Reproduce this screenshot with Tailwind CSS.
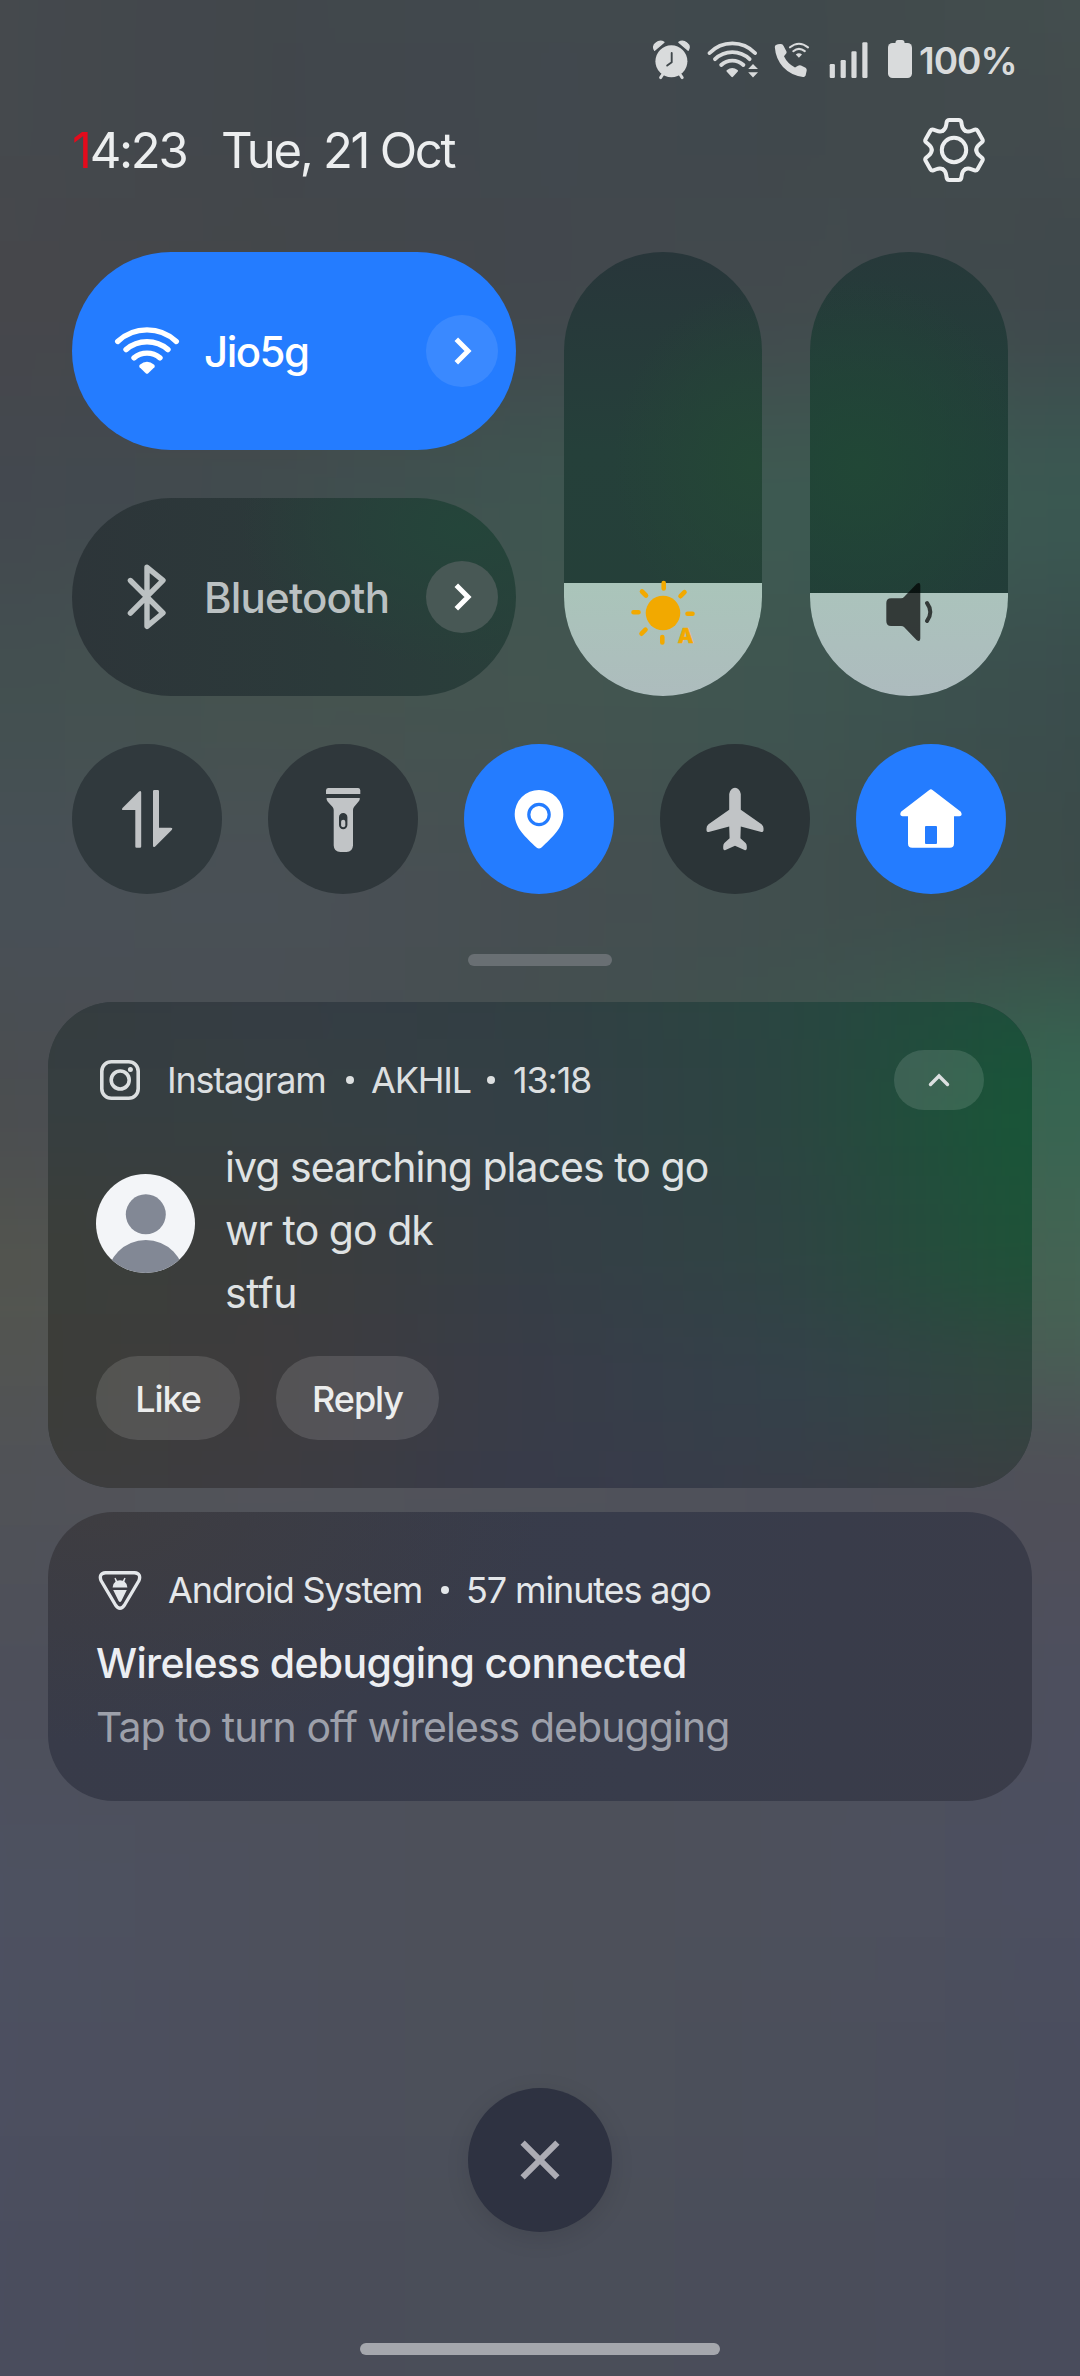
<!DOCTYPE html>
<html lang="en">
<head>
<meta charset="utf-8">
<title>Quick settings</title>
<script src="https://cdn.jsdelivr.net/npm/@tailwindcss/browser@4"></script>
</head>
<body class="font-['Inter',sans-serif]">
<main class="relative isolate flex h-[2376px] w-[1080px] flex-col overflow-hidden bg-[#494d55] text-[#e4e7ea]">

  <!-- Soft wallpaper -->
  <div class="absolute -inset-[198px] -z-10 flex flex-col blur-[64px]">
    <div class="h-[198px] bg-[linear-gradient(90deg,#46494d_13.4%,#42484b_31.7%,#404a4c_50%,#404a4c_68.3%,#44514f_86.6%)]"></div>
    <div class="h-[198px] bg-[linear-gradient(90deg,#45494d_13.4%,#41464b_31.7%,#41484e_50%,#40484c_68.3%,#434c4d_86.6%)]"></div>
    <div class="h-[198px] bg-[linear-gradient(90deg,#46474b_13.4%,#44474a_31.7%,#42474d_50%,#424a4d_68.3%,#3f484c_86.6%)]"></div>
    <div class="h-[198px] bg-[linear-gradient(90deg,#43484f_13.4%,#414b4e_31.7%,#3e5650_50%,#3d5b51_68.3%,#3a5952_86.6%)]"></div>
    <div class="h-[198px] bg-[linear-gradient(90deg,#435050_13.4%,#45524f_31.7%,#445550_50%,#3e5550_68.3%,#3a4c4c_86.6%)]"></div>
    <div class="h-[198px] bg-[linear-gradient(90deg,#485057_13.4%,#4a5056_31.7%,#464e51_50%,#404e4e_68.3%,#3b4a48_86.6%)]"></div>
    <div class="h-[198px] bg-[linear-gradient(90deg,#4a4d50_13.4%,#494e54_31.7%,#444f4f_50%,#3e554e_68.3%,#356851_86.6%)]"></div>
    <div class="h-[198px] bg-[linear-gradient(90deg,#53554f_13.4%,#515352_31.7%,#4c5053_50%,#48564f_68.3%,#456554_86.6%)]"></div>
    <div class="h-[198px] bg-[linear-gradient(90deg,#505257_13.4%,#52535a_31.7%,#50525a_50%,#4e505a_68.3%,#504f58_86.6%)]"></div>
    <div class="h-[198px] bg-[linear-gradient(90deg,#4d4f5a_13.4%,#4d4f5a_31.7%,#4c4f5a_50%,#4c4f5b_68.3%,#4d4f5e_86.6%)]"></div>
    <div class="h-[198px] bg-[linear-gradient(90deg,#4d5161_13.4%,#4d505c_31.7%,#4d5059_50%,#4d505c_68.3%,#4c4f61_86.6%)]"></div>
    <div class="h-[198px] bg-[linear-gradient(90deg,#4c4f60_13.4%,#4c4f5c_31.7%,#4c5059_50%,#4b4f5b_68.3%,#4a4d5d_86.6%)]"></div>
    <div class="h-[198px] bg-[linear-gradient(90deg,#4a4d5e_13.4%,#4a4d59_31.7%,#4a4e59_50%,#4a4d5a_68.3%,#494c5c_86.6%)]"></div>
    <div class="h-[198px] bg-[linear-gradient(90deg,#4a4d5c_13.4%,#4a4d5a_31.7%,#4a4d59_50%,#4a4d5a_68.3%,#494c5b_86.6%)]"></div>
  </div>

  <!-- Status bar -->
  <div class="flex h-[80px] items-start pt-[40px] pl-[653px] text-[#d9dbdc]">
    <svg class="h-10 w-[38px] shrink-0" viewBox="0 0 38 40" fill="currentColor">
      <circle cx="18.4" cy="21.3" r="16"/>
      <path d="M1.6 10.3Q-1 6 3 3Q7 -.4 11 2.2Z M35.2 10.3Q37.8 6 33.8 3Q29.8 -.4 25.8 2.2Z" stroke="currentColor" stroke-width="1.2" stroke-linejoin="round"/>
      <path d="M10 34L7.6 37.6M26.8 34L29.2 37.6" stroke="currentColor" stroke-width="3" stroke-linecap="round"/>
      <path d="M18.7 13V22.2L14.2 25.6" fill="none" stroke="#40474b" stroke-width="1.9" stroke-linecap="round" stroke-linejoin="round"/>
    </svg>
    <svg class="mt-px ml-4 h-[38px] w-[52px] shrink-0" viewBox="0 0 52 38" fill="currentColor">
      <g fill="none" stroke="currentColor" stroke-width="3.9" stroke-linecap="round">
        <path d="M2.6 12A31.5 31.5 0 0 1 48 12"/><path d="M8 18.2A24.7 24.7 0 0 1 42.6 18.2"/><path d="M14.2 24A16.3 16.3 0 0 1 36.4 24"/>
      </g>
      <path d="M19.6 30.4Q19 29.6 20 29Q25.2 25 30.6 29Q31.4 29.6 30.8 30.4L26 35.8Q25.2 36.6 24.4 35.8Z"/>
      <path d="M41.2 28L46 23L51 28ZM41.2 31.2H51L46 36.4Z"/>
    </svg>
    <svg class="mt-px ml-[15px] h-[38px] w-[36px] shrink-0" viewBox="0 0 36 38" fill="currentColor">
      <path d="M.8 6Q.8 4.6 2 4Q4 2.8 7 3Q8.8 3.2 9.6 5L12.5 10.5Q13 12 11.8 13L10 15.2Q13 22 21 26.6L24 24.8Q25.5 24 27 24.6L31.6 26.8Q33 27.8 32.7 29.5L31.6 34.5Q31 36.2 29 35.9Q17 34.5 9 26Q1.6 17.5 .8 6Z"/>
      <g fill="none" stroke="currentColor" stroke-width="2.1" stroke-linecap="round"><path d="M16 6.3Q24.9 -.8 34 6.3"/><path d="M19.3 10.2Q24.9 5.6 30.8 10.2"/></g>
      <path d="M21.8 13.6Q24.9 11 28 13.6L24.9 16.8Z"/>
    </svg>
    <svg class="ml-[19px] h-10 w-[40px] shrink-0" viewBox="0 0 40 40" fill="currentColor">
      <rect x=".7" y="24" width="5.2" height="14" rx="1.2"/><rect x="11.6" y="20" width="5.2" height="18" rx="1.2"/><rect x="22.4" y="11.3" width="5.2" height="26.7" rx="1.2"/><rect x="33.3" y="2.2" width="5.2" height="35.8" rx="1.2"/>
    </svg>
    <svg class="ml-[19px] h-10 w-6 shrink-0" viewBox="0 0 24 40" fill="currentColor">
      <rect x="0" y="3" width="24" height="35" rx="4.5"/><rect x="7.5" y="0" width="9" height="6" rx="2.5"/>
    </svg>
    <span class="ml-[7px] text-[37px] leading-[41px] font-semibold tracking-[-1px] whitespace-nowrap">100%</span>
  </div>

  <!-- Clock, date, settings -->
  <div class="flex h-[140px] items-center pr-[94px] pl-[72px] text-[49px] font-normal tracking-[-2.3px] text-[#eceeef]">
    <span class="mt-[2px] w-[149px] whitespace-nowrap"><span class="text-[#e30b1c]">1</span>4:23</span>
    <span class="mt-[2px] whitespace-nowrap">Tue, 21 Oct</span>
    <svg class="ml-auto h-[68px] w-[64px] shrink-0" viewBox="-32 -34 64 68" fill="none" stroke="currentColor" stroke-width="4" stroke-linecap="round">
      <defs><path id="tooth" d="M-11.15 -19.3C-9 -20.5 -8.2 -22.5 -7.8 -25L-7.3 -28Q-6.8 -30 -4.8 -30H4.8Q6.8 -30 7.3 -28L7.8 -25C8.2 -22.5 9 -20.5 11.15 -19.3"/></defs>
      <use href="#tooth"/><use href="#tooth" transform="rotate(60)"/><use href="#tooth" transform="rotate(120)"/><use href="#tooth" transform="rotate(180)"/><use href="#tooth" transform="rotate(240)"/><use href="#tooth" transform="rotate(300)"/>
      <circle r="12.2"/>
    </svg>
  </div>

  <!-- Large tiles and sliders -->
  <div class="mx-[72px] mt-8 flex gap-12">
    <div class="flex w-[444px] flex-col gap-12">
      <div class="flex h-[198px] items-center rounded-full bg-[#247cff] pr-[18px] pl-[42px] text-white">
        <svg class="h-[50px] w-[66px] shrink-0" viewBox="0 0 66 50" fill="currentColor">
          <g fill="none" stroke="currentColor" stroke-width="5.4" stroke-linecap="round">
            <path d="M3.7 15.4A43 43 0 0 1 62.3 15.4"/><path d="M12 23.6A32 32 0 0 1 54 23.6"/><path d="M20 31.8A20.5 20.5 0 0 1 46 31.8"/>
          </g>
          <path d="M25.6 41.2Q24.6 40 25.8 38.8Q33 32.8 40.2 38.8Q41.4 40 40.4 41.2L34 47.4Q33 48.2 32 47.4Z"/>
        </svg>
        <span class="mt-px ml-6 text-[42px] font-medium tracking-[-1.5px] whitespace-nowrap">Jio5g</span>
        <span class="ml-auto flex size-[72px] items-center justify-center rounded-full bg-white/10">
          <svg class="ml-[1px] h-7 w-[18px]" viewBox="0 0 18 28" fill="none" stroke="currentColor" stroke-width="5"><path d="M2.3 2.3L14 14L2.3 25.7"/></svg>
        </span>
      </div>
      <div class="flex h-[198px] items-center rounded-full bg-[radial-gradient(ellipse_50%_70%_at_88%_15%,#24453a,transparent),linear-gradient(90deg,#2d3539,#2b3a3a_60%,#293f3a)] pr-[18px] pl-[53px] text-[#bbc1c2]">
        <svg class="h-[68px] w-[44px] shrink-0" viewBox="0 0 44 68" fill="none" stroke="currentColor" stroke-width="5.4" stroke-linecap="round" stroke-linejoin="round"><path d="M5.4 17.5L38 50L22 63.3V4.3L38 17.3L5.4 50.2"/></svg>
        <span class="ml-[35px] text-[42px] font-[480] tracking-[-.8px] whitespace-nowrap">Bluetooth</span>
        <span class="ml-auto flex size-[72px] items-center justify-center rounded-full bg-[#485855] text-white">
          <svg class="ml-[1px] h-7 w-[18px]" viewBox="0 0 18 28" fill="none" stroke="currentColor" stroke-width="5"><path d="M2.3 2.3L14 14L2.3 25.7"/></svg>
        </span>
      </div>
    </div>
    <div class="relative flex h-[444px] w-[198px] flex-col justify-end overflow-hidden rounded-full bg-[radial-gradient(ellipse_70%_40%_at_95%_48%,#244736,transparent),linear-gradient(180deg,#28363a,#25403a_45%,#253f38)]">
      <div class="h-[113px] bg-[linear-gradient(180deg,#aac5ba,#adbcbd)]"></div>
      <svg class="absolute top-[328px] left-[66px] h-[68px] w-[68px]" viewBox="0 0 68 68" fill="#f2a900">
        <circle cx="33" cy="33" r="17.3"/>
        <path d="M33.7 3V8.5M32.3 57V62.5M3.5 32.3H8.5M57.5 33.7H62.5M12 11.5L16 15.5M54.5 12.2L50.5 16.2M15.5 49.7L11.5 53.7" stroke="#f2a900" stroke-width="4.6" stroke-linecap="round"/>
        <text x="47.8" y="63" font-size="20.5" font-weight="800" stroke="#f2a900" stroke-width=".5">A</text>
      </svg>
    </div>
    <div class="relative flex h-[444px] w-[198px] flex-col justify-end overflow-hidden rounded-full bg-[radial-gradient(ellipse_85%_42%_at_25%_48%,#214736,transparent),linear-gradient(180deg,#27393a,#214039_45%,#233b38)]">
      <div class="h-[103px] bg-[linear-gradient(180deg,#abc3bc,#adbbbe)]"></div>
      <svg class="absolute top-[328px] left-[74px] h-[64px] w-[52px] text-black/70" viewBox="0 0 52 64" fill="currentColor">
        <path d="M7 18.3H17Q19 18.3 20 17L32.5 4Q36.3 1.5 36.3 5.5V58.5Q36.3 62.5 32.5 60L20 47Q19 46 17 46H7Q2.3 46 2.3 41V23Q2.3 18.3 7 18.3Z"/>
        <path d="M43 23Q49.6 32 43 41" fill="none" stroke="currentColor" stroke-width="4" stroke-linecap="round"/>
      </svg>
    </div>
  </div>

  <!-- Round toggles -->
  <div class="mx-[72px] mt-12 flex gap-[46px] text-[#c1c4c6]">
    <div class="flex size-[150px] items-center justify-center rounded-full bg-[#30393d]">
      <svg class="size-[62px]" viewBox="-4 0 62 62" fill="currentColor">
        <path d="M19 3.5L2.5 20Q1 22 3.5 22H15.3V58.5Q15.3 59.8 16.5 59.8H20Q21.2 59.8 21.2 58.5V4.5Q21.2 2 19 3.5Z"/>
        <path d="M35.2 58.5L51.7 42Q53.2 39.7 50.7 39.7H39V3.3Q39 2 37.8 2H34.2Q33 2 33 3.3V57.5Q33 60 35.2 58.5Z"/>
      </svg>
    </div>
    <div class="flex size-[150px] items-center justify-center rounded-full bg-[#2f373b]">
      <svg class="mt-px h-[68px] w-[36px]" viewBox="0 0 36 68" fill="currentColor">
        <path d="M3 2H33.3Q35.3 2 35.3 4.5V8H1V4.5Q1 2 3 2Z"/>
        <path fill-rule="evenodd" d="M1.6 12H34.8Q35 14 33.6 15.6L29 21Q28 22.3 28 24V59.5Q27.5 66 21.5 66H15.5Q9 66 8.7 59.5V24Q8.7 22.3 7.6 21L2.6 15.4Q1.3 14 1.6 12ZM18.2 27A4.2 4.2 0 0 0 14 31.2V39A4.2 4.2 0 0 0 22.4 39V31.2A4.2 4.2 0 0 0 18.2 27Z"/>
        <rect x="16.1" y="33.7" width="4.2" height="7.6" rx="2.1"/>
      </svg>
    </div>
    <div class="flex size-[150px] items-center justify-center rounded-full bg-[#247cff] text-white">
      <svg class="h-[62px] w-[54px]" viewBox="0 0 54 62">
        <path fill="currentColor" d="M27 2A24.3 24.3 0 0 0 2.7 26.3C2.7 40 14 49.5 24.5 59.6Q27 61.6 29.5 59.6C40 49.5 51.3 40 51.3 26.3A24.3 24.3 0 0 0 27 2Z"/>
        <circle cx="27" cy="26.5" r="10.2" fill="none" stroke="#247cff" stroke-width="3.2"/>
      </svg>
    </div>
    <div class="flex size-[150px] items-center justify-center rounded-full bg-[#2b3437]">
      <svg class="h-[66px] w-[60px]" viewBox="0 0 60 66" fill="currentColor">
        <path d="M30 1.7Q34.5 1.9 35.8 8V23.7L56.5 38.2Q58.6 40 58.5 42.5V44.5Q58.3 46.3 56.3 46L35.8 40.5L35.4 52.3L40.6 57Q41.8 58.4 41.8 60.5V62.5Q41.5 64.8 39.5 64L30 59.7L20.5 64Q18.5 64.8 18.2 62.5V60.5Q18.2 58.4 19.4 57L24.6 52.3L24.2 40.5L3.7 46Q1.7 46.3 1.5 44.5V42.5Q1.4 40 3.5 38.2L24.2 23.7V8Q25.5 1.9 30 1.7Z"/>
      </svg>
    </div>
    <div class="flex size-[150px] items-center justify-center rounded-full bg-[#247cff] text-white">
      <svg class="h-[64px] w-[66px]" viewBox="0 0 66 64" fill="currentColor">
        <path fill-rule="evenodd" d="M31.3 2.9Q32.9 1.4 34.5 2.9L62.8 24.8Q65 28.9 61.5 29.2H56V56.5Q56 60.8 51.8 60.8H14.2Q10 60.8 10 56.5V29.2H4.5Q1 28.9 3 24.8ZM28 39Q27 39 27 40V56Q27 57 28 57H38Q39 57 39 56V40Q39 39 38 39Z"/>
      </svg>
    </div>
  </div>

  <div class="mx-auto mt-[60px] h-3 w-[144px] rounded-full bg-[#696f73]"></div>

  <!-- Instagram notification -->
  <section class="relative isolate mx-12 mt-9 flex h-[486px] flex-col overflow-hidden rounded-[66px] bg-[#363e43] px-12">
    <div class="absolute -inset-[100px] -z-10 flex flex-col blur-[44px]">
      <div class="flex-1 bg-[linear-gradient(90deg,#343c3e_8.4%,#353c45_29.2%,#313f42_50%,#294641_70.8%,#1e4d3b_91.6%)]"></div>
      <div class="flex-1 bg-[linear-gradient(90deg,#363e40_8.4%,#363f42_29.2%,#333f46_50%,#2b4541_70.8%,#175637_91.6%)]"></div>
      <div class="flex-1 bg-[linear-gradient(90deg,#3b3e3a_8.4%,#3b3d3d_29.2%,#353e46_50%,#2f4443_70.8%,#1d5337_91.6%)]"></div>
      <div class="flex-1 bg-[linear-gradient(90deg,#3c3d39_8.4%,#3e3c3e_29.2%,#383c48_50%,#34414a_70.8%,#31473f_91.6%)]"></div>
      <div class="flex-1 bg-[linear-gradient(90deg,#3d3d3e_8.4%,#3d3c42_29.2%,#373b4b_50%,#393c48_70.8%,#3d3d42_91.6%)]"></div>
    </div>
    <header class="mt-[48px] flex h-[60px] items-center text-[36px] tracking-[-1.2px] text-[#dcdfe0]">
      <svg class="ml-1 size-10 shrink-0" viewBox="0 0 40 40" fill="none" stroke="currentColor" stroke-width="3.6">
        <rect x="1.8" y="1.8" width="36.4" height="36.4" rx="9.5"/><circle cx="20.2" cy="20" r="9"/><circle cx="30.4" cy="9.6" r="2.5" fill="currentColor" stroke="none"/>
      </svg>
      <span class="ml-[27px] w-[179px] whitespace-nowrap">Instagram</span>
      <i class="size-2 shrink-0 rounded-full bg-current"></i>
      <span class="ml-[17px] w-[116px] whitespace-nowrap">AKHIL</span>
      <i class="size-2 shrink-0 rounded-full bg-current"></i>
      <span class="ml-[18px] whitespace-nowrap">13:18</span>
      <span class="ml-auto flex h-[60px] w-[90px] items-center justify-center rounded-full bg-white/12">
        <svg class="h-3.5 w-[22px]" viewBox="0 0 22 14" fill="none" stroke="currentColor" stroke-width="3.4" stroke-linecap="round"><path d="M2.5 11.5L11 3L19.5 11.5"/></svg>
      </span>
    </header>
    <div class="mt-[26px] flex items-center">
      <svg class="mb-[14px] size-[99px] shrink-0" viewBox="0 0 99 99">
        <clipPath id="avatar"><circle cx="49.5" cy="49.5" r="49.5"/></clipPath>
        <g clip-path="url(#avatar)"><rect width="99" height="99" fill="#f3f5f8"/><circle cx="49.8" cy="40.3" r="20" fill="#828895"/><circle cx="49.8" cy="105" r="39" fill="#828895"/></g>
      </svg>
      <p class="ml-[30px] text-[41px] leading-[63px] tracking-[-.97px] whitespace-nowrap text-[#dfe2e3]">ivg searching places to go<br>wr to go dk<br><span class="tracking-[-.3px]">stfu</span></p>
    </div>
    <div class="mt-[31px] flex gap-9 text-[36px] font-medium tracking-[-1.1px] text-[#eceded]">
      <span class="flex h-[84px] w-[144px] items-center justify-center rounded-full bg-white/12 pt-[2px]">Like</span>
      <span class="flex h-[84px] w-[163px] items-center justify-center rounded-full bg-white/12 pt-[2px]">Reply</span>
    </div>
  </section>

  <!-- Android System notification -->
  <section class="mx-12 mt-6 h-[289px] rounded-[66px] bg-[radial-gradient(ellipse_45%_80%_at_5%_0%,#3e3d41,transparent),linear-gradient(90deg,#383b49,#383c4b_60%,#3a3c49)] px-12 pt-12">
    <header class="flex h-[60px] items-center text-[36px] tracking-[-1.13px]">
      <svg class="ml-[2px] h-[41px] w-[44px] shrink-0" viewBox="0 0 44 41" fill="none" stroke="currentColor" stroke-width="3.4" stroke-linejoin="round">
        <path d="M7.5 2.7H36.5Q43.5 3.4 41 10.5L26.5 35Q22 41.5 17.5 35L3 10.5Q.5 3.4 7.5 2.7Z"/>
        <path fill="currentColor" stroke="none" d="M14.6 17.5Q15 13.5 17.6 11.6L16.4 8.2L17.6 7.7L19.2 10.7Q22 9.6 24.8 10.7L26.4 7.7L27.6 8.2L26.4 11.6Q29 13.5 29.4 17.5ZM15.2 20H28.8L23.4 31Q22 33 20.6 31Z"/>
      </svg>
      <span class="ml-[26px] w-[273px] whitespace-nowrap">Android System</span>
      <i class="size-2 shrink-0 rounded-full bg-current"></i>
      <span class="ml-[17px] whitespace-nowrap">57 minutes ago</span>
    </header>
    <p class="mt-[11px] text-[41px] leading-[64px] font-medium tracking-[-.7px] whitespace-nowrap text-[#eceef2]">Wireless debugging connected</p>
    <p class="text-[41px] leading-[64px] tracking-[-.94px] whitespace-nowrap text-[#9da0aa]">Tap to turn off wireless debugging</p>
  </section>

  <!-- Clear all -->
  <div class="mx-auto mt-[287px] flex size-36 items-center justify-center rounded-full bg-[#2e3241] shadow-[0_6px_24px_rgba(0,0,0,0.1)]">
    <svg class="size-10" viewBox="0 0 40 40" stroke="#acacb4" stroke-width="6"><path d="M2.6 2.6L37.4 37.4M37.4 2.6L2.6 37.4"/></svg>
  </div>
  <div class="mx-auto mt-[111px] h-3 w-[360px] rounded-full bg-[#a5a7ad]"></div>
</main>
</body>
</html>
